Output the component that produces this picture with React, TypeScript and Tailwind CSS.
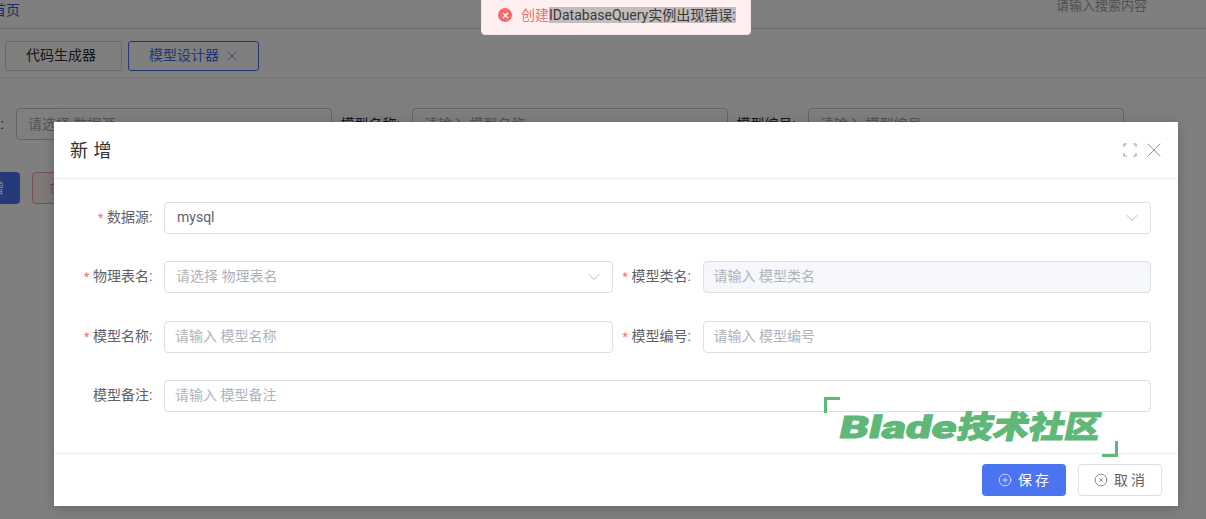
import { ChevronDown, CirclePlus, CircleX, Trash2, X } from "lucide-react";

const font = "font-['Roboto','Noto_Sans_CJK_SC',sans-serif]";

function Label({ text, required, width }: { text: string; required?: boolean; width: string }) {
  return (
    <div className={`${width} shrink-0 pr-[11.5px] text-right text-[14px] leading-[30px] text-[#606266]`}>
      {required && <span className="mr-[4px] text-[12px] text-[#f56c6c]">*</span>}
      {text}:
    </div>
  );
}

function Field({ text, value, select, disabled }: { text: string; value?: boolean; select?: boolean; disabled?: boolean }) {
  return (
    <div
      className={`flex h-[32px] min-w-0 flex-1 items-center justify-between rounded-[4px] border border-[#dcdfe6] pl-[11px] pr-[8px] text-[14px] ${
        disabled ? "bg-[#f5f7fa]" : "bg-white"
      } ${value ? "text-[#606266]" : "text-[#b0b3ba]"}`}
    >
      <span className={`pb-[1px] ${value ? "pl-[1px]" : select ? "pl-0" : "-ml-[1px]"}`}>{text}</span>
      {select && <ChevronDown size={20} strokeWidth={1} className="text-[#a8abb2]" />}
    </div>
  );
}

function BackField({ label, text, width }: { label: string; text: string; width: string }) {
  return (
    <div className="flex items-center">
      <span className={`${width} shrink-0 pr-[12px] text-right text-[14px] text-[#303030]`}>{label}</span>
      <div className="flex h-[32px] w-[316px] items-center rounded-[4px] border border-[#c8c8c8] px-[11px] text-[14px] text-[#a8a8a8]">
        {text}
      </div>
    </div>
  );
}

export default function App() {
  return (
    <div className={`relative h-[519px] w-[1206px] overflow-hidden bg-[#fff] ${font}`}>
      <div className="flex h-[29px] items-center justify-between border-b border-[#d8d8d8] pr-[59px] text-[14px]">
        <span className="-ml-[8px] -mt-[8px] text-[#2f5fd0]">首页</span>
        <span className="-mt-[16px] text-[13px] text-[#a0a0a0]">请输入搜索内容</span>
      </div>
      <div className="flex h-[49px] items-center gap-[6px] border-b border-[#e8e8e8] pl-[5px] pt-[5px] text-[14px]">
        <div className="flex h-[30px] w-[117px] items-center rounded-[3px] border border-[#cfd3d8] pl-[20px] text-[#303030]">代码生成器</div>
        <div className="flex h-[30px] w-[131px] items-center gap-[5px] rounded-[3px] border border-[#3f6fe8] pl-[20px] text-[#3f6fe8]">
          模型设计器
          <X size={16} strokeWidth={1.1} />
        </div>
      </div>
      <div className="ml-[-84px] mt-[30px] flex h-[32px]">
        <BackField label="数据源:" text="请选择 数据源" width="w-[100px]" />
        <BackField label="模型名称:" text="请输入 模型名称" width="w-[80px]" />
        <BackField label="模型编号:" text="请输入 模型编号" width="w-[80px]" />
      </div>
      <div className="ml-[-30px] mt-[32px] flex h-[32px] gap-[12px] text-[14px]">
        <div className="flex w-[50px] items-center justify-end rounded-[4px] bg-[#4a74f0] pr-[16px] text-white">增</div>
        <div className="flex w-[60px] items-center rounded-[4px] border border-[#f0a0a0] bg-[#fef0f0] pl-[16px] text-[#f56c6c]">
          <Trash2 size={14} strokeWidth={1.5} />
        </div>
      </div>

      <div className="absolute inset-0 bg-black/50" />

      <div className="absolute left-[481px] top-[-10px] flex h-[45px] w-[270px] items-center gap-[9px] rounded-[4px] border border-[#fde2e2] bg-[#fef0f0] pl-[16px] pt-[5px] text-[14px]">
        <span className="flex h-[14px] w-[14px] shrink-0 items-center justify-center rounded-full bg-[#f56c6c] text-white">
          <X size={9} strokeWidth={3} />
        </span>
        <span className="whitespace-nowrap text-[#f56c6c]">
          创建<span className="bg-[#c2bcbc] leading-[19px] text-[#3a3a3a]">IDatabaseQuery实例出现错误:</span>
        </span>
      </div>

      <div className="absolute left-[54px] top-[122px] flex h-[384px] w-[1124px] flex-col bg-white shadow-[0_2px_12px_rgba(0,0,0,0.2)]">
        <div className="flex h-[57px] shrink-0 items-center justify-between border-b border-[#ebeef5] pl-[16px] pr-[12px]">
          <span className="pt-[1px] text-[18px] tracking-[0.5px] text-[#303133]">新 增</span>
          <div className="flex items-center gap-[5px] text-[#909399]">
            <svg width="14" height="14" viewBox="0 0 14 14" fill="none" stroke="#a3a6ad" strokeWidth="1.2">
              <path d="M1 4V1h3M10 1h3v3M13 10v3h-3M4 13H1v-3" />
            </svg>
            <X size={24} strokeWidth={1} />
          </div>
        </div>
        <div className="flex flex-1 flex-col pr-[27px] pt-[23px]">
          <div className="flex">
            <Label text="数据源" required width="w-[110px]" />
            <Field text="mysql" value select />
          </div>
          <div className="mt-[27px] flex">
            <Label text="物理表名" required width="w-[110px]" />
            <Field text="请选择 物理表名" select />
            <Label text="模型类名" required width="w-[90px]" />
            <Field text="请输入 模型类名" disabled />
          </div>
          <div className="mt-[28px] flex">
            <Label text="模型名称" required width="w-[110px]" />
            <Field text="请输入 模型名称" />
            <Label text="模型编号" required width="w-[90px]" />
            <Field text="请输入 模型编号" />
          </div>
          <div className="mt-[27px] flex">
            <Label text="模型备注" width="w-[110px]" />
            <Field text="请输入 模型备注" />
          </div>
        </div>
        <div className="flex h-[53px] shrink-0 items-start justify-end gap-[12px] border-t border-[#ebeef5] pr-[16px] pt-[10px] text-[14px]">
          <div className="flex h-[32px] w-[84px] items-center gap-[6px] rounded-[4px] bg-[#4a74f0] pl-[16px] tracking-[3px] text-white">
            <CirclePlus size={14} strokeWidth={1.2} />
            保存
          </div>
          <div className="flex h-[32px] w-[84px] items-center gap-[6px] rounded-[4px] border border-[#dcdfe6] bg-white pl-[15px] tracking-[3px] text-[#606266]">
            <CircleX size={14} strokeWidth={1.2} />
            取消
          </div>
        </div>
      </div>

      <div className="absolute left-[824px] top-[397px] h-[60px] w-[294px]">
        <div className="absolute left-0 top-0 h-[16px] w-[16px] border-l-[3px] border-t-[3px] border-[#5fb878]" />
        <div className="absolute bottom-0 right-0 h-[16px] w-[16px] border-b-[3px] border-r-[3px] border-[#5fb878]" />
        <div className="absolute left-[16px] top-[13px] flex skew-x-[-12deg] whitespace-nowrap text-[31px] font-black leading-[36px] text-[#5fb878] [-webkit-text-stroke:1px_#5fb878]">
          <span className="inline-block w-[118px] origin-left scale-x-[1.47]">Blade</span>
          <span className="inline-block origin-left scale-x-[1.15]">技术社区</span>
        </div>
      </div>
    </div>
  );
}
